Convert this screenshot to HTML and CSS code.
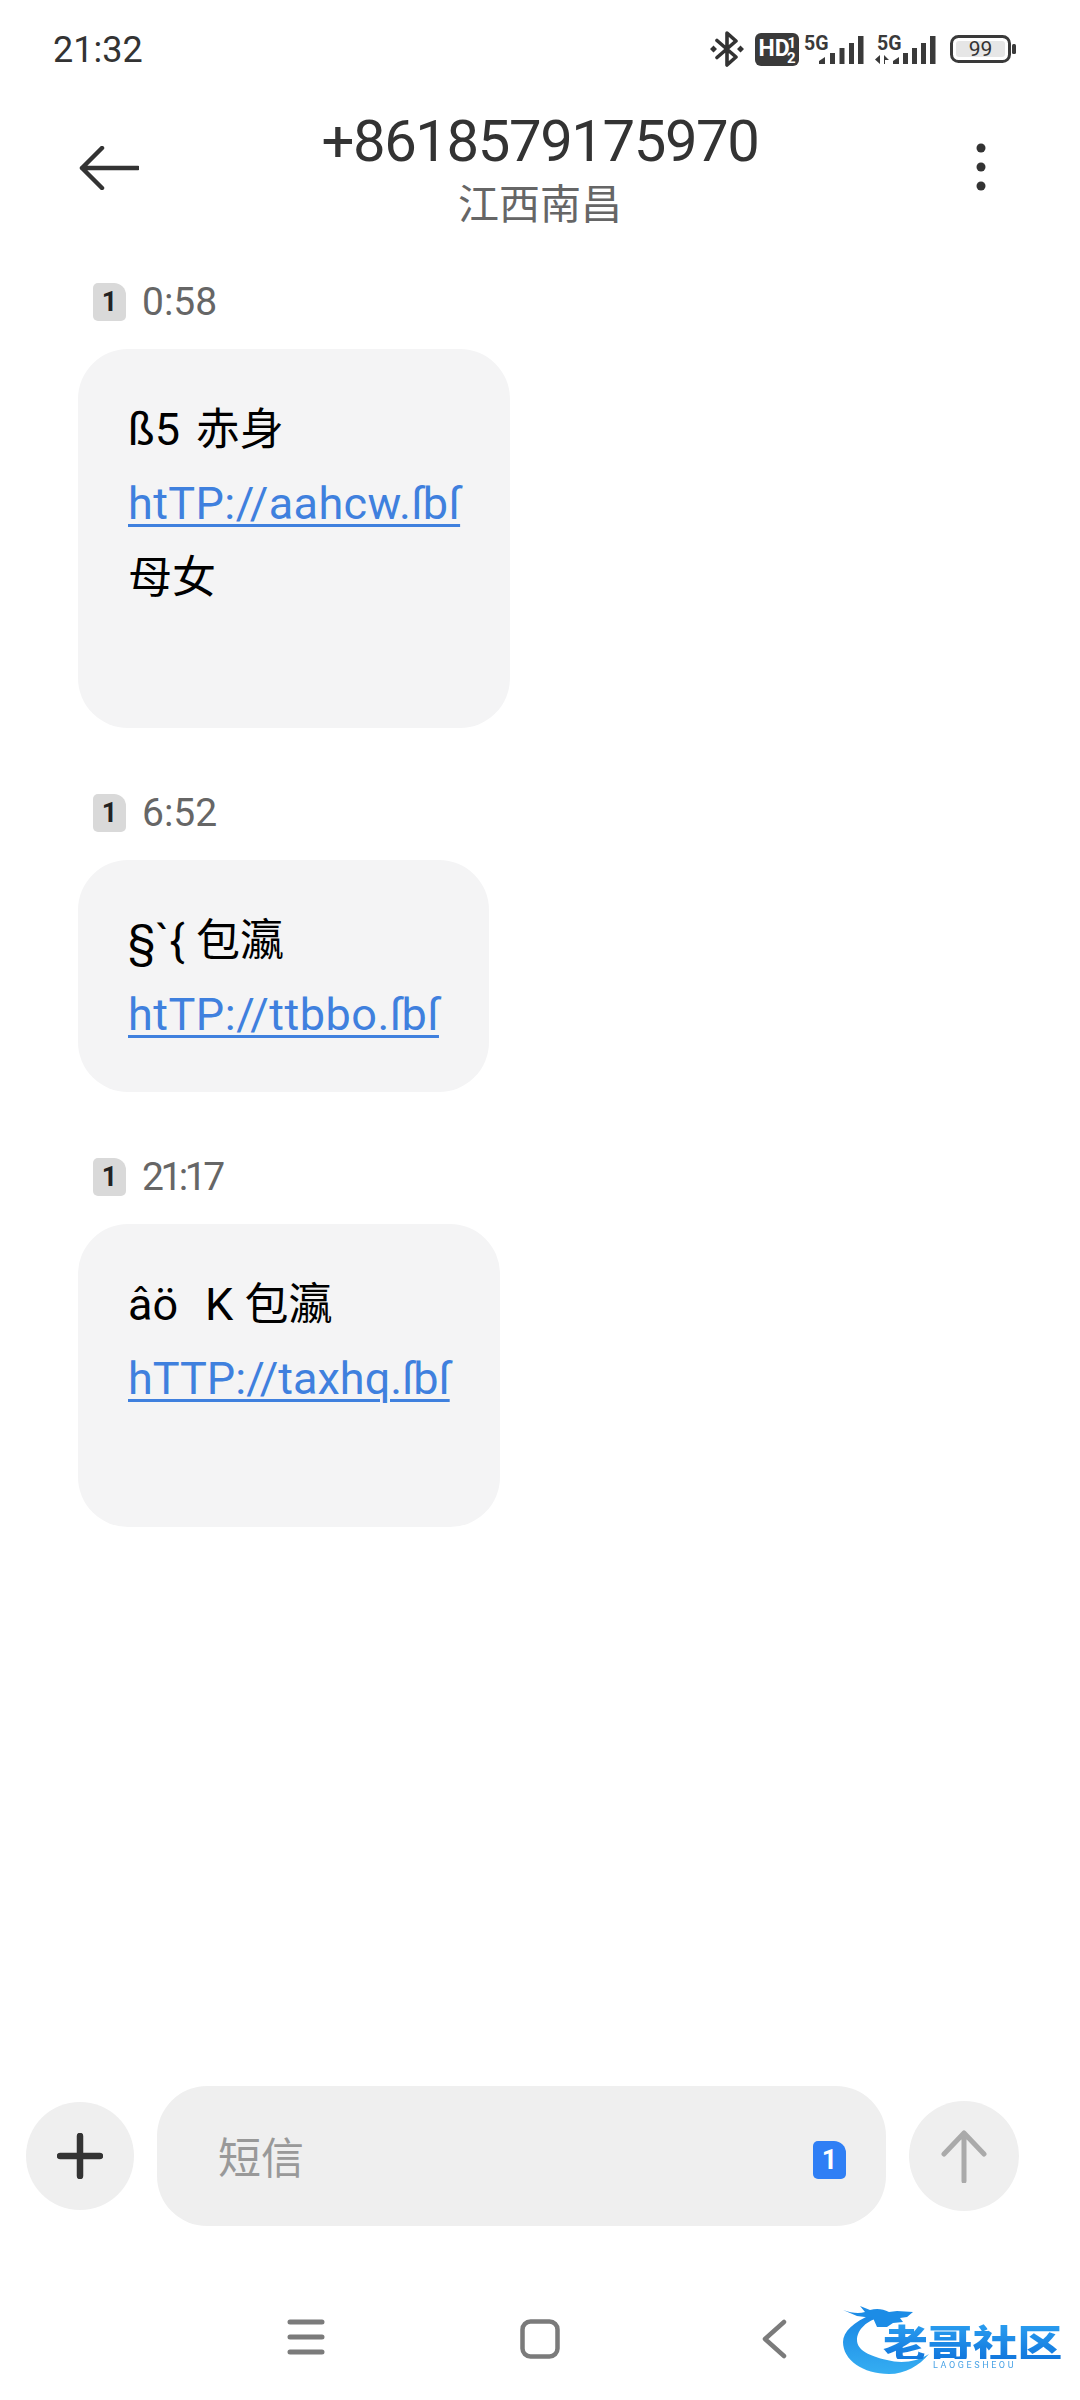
FILE: index.html
```html
<!DOCTYPE html>
<html lang="zh-CN">
<head>
    <meta charset="UTF-8">
    <meta name="viewport" content="width=device-width, initial-scale=1.0">
    <title>+8618579175970</title>
    <link rel="stylesheet" href="styles.css">
</head>
<body>
    <div class="phone">
        <div class="status-bar">
            <span class="clock">21:32</span>
            <div class="status-icons">
                <svg width="34" height="36" viewBox="0 0 34 36">
                    <path d="M7 9.500 26 26 17 34V2L26 10 7 26.500" fill="none" stroke="#333" stroke-width="3.600" stroke-linejoin="round" stroke-linecap="round"/>
                    <path d="M3.500 14.500 7 18 3.500 21.500 0 18ZM30.500 14.500 34 18 30.500 21.500 27 18Z" fill="#333"/>
                </svg>
                <svg class="ic-hd" width="44" height="33" viewBox="0 0 44 33">
                    <rect width="44" height="33" rx="6" fill="#3a3a3a"/>
                    <text x="3.500" y="23" class="hd-text">HD</text>
                    <text x="32.500" y="15" class="hd-frac">1</text>
                    <text x="32" y="30" class="hd-frac">2</text>
                </svg>
                <svg class="ic-signal" width="60" height="36" viewBox="0 0 60 36">
                    <text x="0" y="18.500" class="sig-text">5G</text>
                    <path d="M15 33V30L21 26V33ZM26 33V22H31V33ZM35.500 33V17H40.500V33ZM45 33V12H50V33ZM54 33V5H59.500V33Z" fill="#3a3a3a"/>
                </svg>
                <svg class="ic-signal" width="61" height="36" viewBox="0 0 61 36">
                    <text x="2" y="18.500" class="sig-text">5G</text>
                    <path d="M5 24V33L0 28.500ZM9 24 14 29H10V33H9ZM18 33V30L24 26V33ZM28 33V22H33V33ZM37 33V17H42V33ZM46 33V12H51V33ZM55 33V5H60.500V33Z" fill="#3a3a3a"/>
                </svg>
                <svg class="ic-batt" width="66" height="28" viewBox="0 0 66 28">
                    <rect x="1.500" y="1.500" width="58" height="25" rx="7" fill="none" stroke="#3a3a3a" stroke-width="3"/>
                    <rect x="6" y="6" width="49" height="16" rx="3" fill="#e6e6e6"/>
                    <rect x="62" y="9" width="4" height="10" rx="1.500" fill="#3a3a3a"/>
                    <text x="30.500" y="21" class="batt-text">99</text>
                </svg>
            </div>
        </div>

        <header class="top-bar">
            <svg class="back" width="60" height="44" viewBox="0 0 60 44">
                <path d="M59 22H3M23 2 3 22 23 42" fill="none" stroke="#333" stroke-width="4.500" stroke-linecap="round" stroke-linejoin="round"/>
            </svg>
            <div class="contact">
                <div class="contact-number">+8618579175970</div>
                <div class="contact-place">江西南昌</div>
            </div>
            <svg class="more" width="10" height="48" viewBox="0 0 10 48">
                <circle cx="5" cy="5" r="4.500" fill="#333"/>
                <circle cx="5" cy="24" r="4.500" fill="#333"/>
                <circle cx="5" cy="43" r="4.500" fill="#333"/>
            </svg>
        </header>

        <main class="messages">
            <section class="msg">
                <div class="msg-meta"><span class="sim-tag">1</span><span>0:58</span></div>
                <div class="bubble">
                    <div class="line">ß5&nbsp;&#8202;<span class="cjk">赤身</span></div>
                    <div class="line"><a class="link">htTP://aahcw.ſbſ</a></div>
                    <div class="line"><span class="cjk">母女</span></div>
                    <div class="line-blank"></div>
                </div>
            </section>
            <section class="msg">
                <div class="msg-meta"><span class="sim-tag">1</span><span>6:52</span></div>
                <div class="bubble">
                    <div class="line">§`{&nbsp;<span class="cjk">包瀛</span></div>
                    <div class="line"><a class="link wide">htTP://ttbbo.ſbſ</a></div>
                </div>
            </section>
            <section class="msg">
                <div class="msg-meta"><span class="sim-tag">1</span><span class="time-narrow">21:17</span></div>
                <div class="bubble">
                    <div class="line">âö&nbsp;&nbsp;&#8202;K&nbsp;<span class="cjk">包瀛</span></div>
                    <div class="line"><a class="link tight">hTTP://taxhq.ſbſ</a></div>
                    <div class="line-blank short"></div>
                </div>
            </section>
        </main>

        <div class="composer">
            <button class="round-btn">
                <svg width="46" height="46" viewBox="0 0 46 46">
                    <path d="M23 3V43M3 23H43" stroke="#333" stroke-width="6.500" stroke-linecap="round"/>
                </svg>
            </button>
            <div class="input-box">
                <span class="placeholder">短信</span>
                <span class="sim-tag sim-blue">1</span>
            </div>
            <button class="round-btn send">
                <svg width="46" height="54" viewBox="0 0 46 54">
                    <path d="M23 52V4M3 25 23 4 43 25" fill="none" stroke="#aaa" stroke-width="5" stroke-linecap="round" stroke-linejoin="round"/>
                </svg>
            </button>
        </div>

        <nav class="nav-bar">
            <svg width="38" height="36" viewBox="0 0 38 36">
                <path d="M3 3H35M3 18H35M3 33H35" stroke="#7b7b7b" stroke-width="5" stroke-linecap="round"/>
            </svg>
            <svg width="40" height="40" viewBox="0 0 40 40">
                <rect x="2.500" y="2.500" width="35" height="35" rx="8" fill="none" stroke="#7b7b7b" stroke-width="4.500"/>
            </svg>
            <svg width="26" height="40" viewBox="0 0 26 40">
                <path d="M23 3 4 20 23 37" fill="none" stroke="#7b7b7b" stroke-width="4.500" stroke-linecap="round" stroke-linejoin="round"/>
            </svg>
        </nav>

        <div class="watermark">
            <svg class="wm-dragon" width="100" height="72" viewBox="0 0 100 72">
                <defs>
                    <linearGradient id="wmRing" x1="0" y1="0" x2="0" y2="1">
                        <stop offset="0" stop-color="#1a86e4"/>
                        <stop offset="1" stop-color="#35aef2"/>
                    </linearGradient>
                </defs>
                <path d="M30 10C10 18 0 28 0 38 0 56 20 70 46 70 62 70 76 62 86 50 74 58 58 60 44 56 26 52 14 46 14 36 14 26 24 16 38 13Z" fill="url(#wmRing)"/>
                <path d="M0 6C8 9 16 10 22 8L17 2 27 6C34 4 40 5 46 8L54 7 70 8 64 13 57 14 60 18 50 19 44 23 34 23 30 14 14 12Z" fill="#1c8ce6"/>
            </svg>
            <div class="wm-name">老哥社区</div>
            <div class="wm-sub">LAOGESHEOU</div>
        </div>
    </div>
</body>
</html>
```

FILE: styles.css
```css
* {
    margin: 0;
    padding: 0;
    box-sizing: border-box;
}

body {
    font-family: Roboto, "Noto Sans CJK SC", sans-serif;
    background: #fff;
    color: #000;
}

.phone {
    position: relative;
    width: 1080px;
    height: 2400px;
    display: flex;
    flex-direction: column;
    overflow: hidden;
}

/* status bar */
.status-bar {
    height: 98px;
    padding: 0 64px 0 53px;
    display: flex;
    align-items: center;
    justify-content: space-between;
}

.clock {
    margin-top: 2px;
    font-size: 36px;
    color: #333;
}

.status-icons {
    display: flex;
    align-items: center;
    gap: 11px;
}

.status-icons svg {
    display: block;
}

.status-icons .ic-hd + .ic-signal {
    margin-left: -6px;
}

.status-icons .ic-batt {
    margin-left: 3px;
}

.hd-text {
    font: 700 23px Roboto, sans-serif;
    fill: #fff;
}

.hd-frac {
    font: 700 15px Roboto, sans-serif;
    fill: #fff;
}

.sig-text {
    font: 700 19.500px Roboto, sans-serif;
    fill: #3a3a3a;
}

.batt-text {
    font: 400 21px Roboto, sans-serif;
    fill: #333;
    text-anchor: middle;
}

/* header */
.top-bar {
    height: 152px;
    padding: 0 78px;
    display: grid;
    grid-template-columns: 1fr auto 1fr;
    align-items: center;
}

.back {
    margin: 0 0 12px 1px;
}

.more {
    justify-self: end;
    margin: 0 16px 14px 0;
}

.contact {
    text-align: center;
    margin-bottom: 12px;
}

.contact-number {
    font-size: 58px;
    line-height: 68px;
    letter-spacing: -1.400px;
    color: #333;
}

.contact-place {
    margin-top: 5px;
    font-size: 41px;
    line-height: 50px;
    color: #666;
}

/* messages */
.messages {
    flex: 1;
    padding: 33px 0 0 78px;
    display: flex;
    flex-direction: column;
    gap: 66px;
}

.msg-meta {
    height: 38px;
    padding-left: 15px;
    margin-bottom: 28px;
    display: flex;
    align-items: center;
    gap: 16px;
    font-size: 39px;
    color: #666;
}

.time-narrow {
    letter-spacing: -3.500px;
}

.sim-tag {
    width: 33px;
    height: 38px;
    border-radius: 5px 12px 5px 5px;
    background: #d9d9d9;
    color: #222;
    font-size: 27px;
    font-weight: 700;
    display: flex;
    align-items: center;
    justify-content: center;
}

.bubble {
    width: fit-content;
    padding: 44px 50px 40px;
    border-radius: 50px;
    background: #f4f4f5;
    font-size: 45px;
}

.line {
    height: 74px;
    line-height: 74px;
    white-space: nowrap;
}

.cjk {
    font-size: 44px;
}

.line-blank {
    height: 73px;
}

.line-blank.short {
    height: 71px;
}

.link {
    color: #3f80de;
    letter-spacing: 0.400px;
    text-decoration: underline;
    text-underline-offset: 5px;
    text-decoration-thickness: 3px;
}

.link.wide {
    letter-spacing: 0.500px;
}

.link.tight {
    letter-spacing: 0;
}

/* composer */
.composer {
    height: 140px;
    padding-left: 26px;
    display: flex;
    align-items: center;
    gap: 23px;
}

.round-btn {
    width: 108px;
    height: 108px;
    border: none;
    border-radius: 50%;
    background: #efefef;
    display: flex;
    align-items: center;
    justify-content: center;
}

.round-btn.send {
    width: 110px;
    height: 110px;
}

.input-box {
    width: 729px;
    height: 140px;
    padding: 0 40px 0 61px;
    border-radius: 50px;
    background: #efefef;
    display: flex;
    align-items: center;
    justify-content: space-between;
}

.placeholder {
    font-size: 43px;
    color: #999;
    margin-bottom: 2px;
}

.sim-blue {
    width: 33px;
    height: 38px;
    margin-top: 8px;
    background: #2f7ff5;
    color: #fff;
}

/* nav bar */
.nav-bar {
    height: 174px;
    padding: 93px 0 0 188px;
    display: grid;
    grid-template-columns: 235px 234px 233px;
    justify-items: center;
    align-items: start;
}

/* watermark sits on top of the nav bar */
.watermark {
    position: absolute;
    left: 843px;
    top: 2304px;
    width: 222px;
    height: 72px;
    filter: blur(0.6px);
}

.wm-dragon {
    position: absolute;
    left: 0;
    top: 0;
}

.wm-name {
    position: absolute;
    left: 40px;
    top: 19px;
    font: 900 38px/36px "Noto Sans CJK SC", sans-serif;
    white-space: nowrap;
    background: linear-gradient(#2a9ef0, #1277dd);
    -webkit-background-clip: text;
    background-clip: text;
    color: transparent;
    transform: scaleX(1.180);
    transform-origin: left center;
}

.wm-sub {
    position: absolute;
    left: 90px;
    top: 56px;
    font: 400 9px/11px Roboto, sans-serif;
    letter-spacing: 2.600px;
    color: #4aa3e6;
}
```
